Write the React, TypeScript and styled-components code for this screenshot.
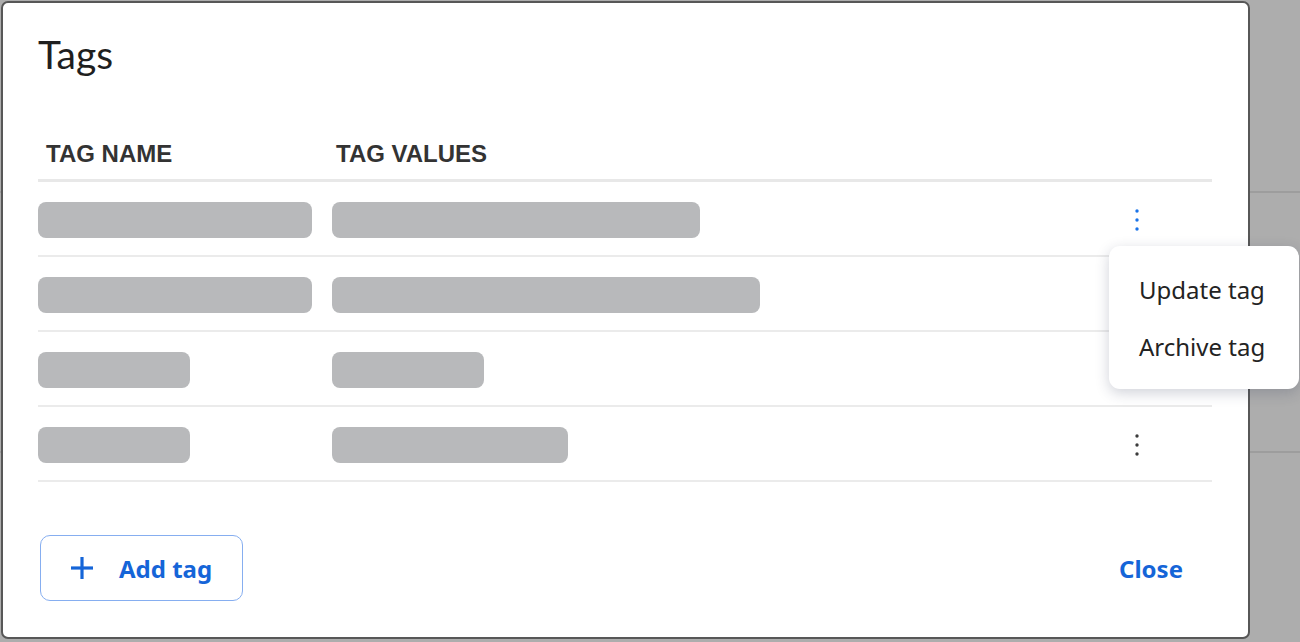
import styled, { createGlobalStyle } from 'styled-components'

const GlobalStyle = createGlobalStyle`
	html, body {
		margin: 0;
		padding: 0;
		background: #adadad;
		font-family: 'Noto Sans', 'Liberation Sans', sans-serif;
	}
`

const Page = styled.div`
	position: relative;
	width: 1300px;
	height: 642px;
	overflow: hidden;
`

const BackdropRow = styled.div<{ $height: number }>`
	height: ${({ $height }) => $height}px;
	border-bottom: 2px solid #9d9d9d;
`

const Dialog = styled.section`
	position: absolute;
	top: 1px;
	left: 1px;
	width: 1249px;
	height: 638px;
	box-sizing: border-box;
	background: #ffffff;
	border: 2px solid #575757;
	border-radius: 7px;
	padding: 27px 36px 0 35px;
	display: flex;
	flex-direction: column;
`

const Title = styled.h2`
	margin: 0;
	font-family: Lato, 'Noto Sans', sans-serif;
	font-weight: 400;
	font-size: 39px;
	line-height: 48px;
	color: #1f1f1f;
`

const Table = styled.div`
	margin-top: 62px;
	display: flex;
	flex-direction: column;
`

const HeaderRow = styled.div`
	display: grid;
	grid-template-columns: 294px 1fr 140px;
	padding-bottom: 11px;
	border-bottom: 3px solid #e8e8e8;
`

const HeaderCell = styled.div<{ $indent: number }>`
	padding-left: ${({ $indent }) => $indent}px;
	font-family: 'Liberation Sans', Arial, sans-serif;
	font-weight: 700;
	font-size: 24px;
	line-height: 28px;
	color: #333333;
`

const Row = styled.div`
	display: grid;
	grid-template-columns: 294px 1fr 140px;
	align-items: center;
	padding: 20px 0 17px;
	border-bottom: 2px solid #ebebeb;
`

const Skeleton = styled.div<{ $width: number }>`
	width: ${({ $width }) => $width}px;
	height: 36px;
	border-radius: 8px;
	background: #b8b9bb;
`

const KebabButton = styled.button<{ $active?: boolean }>`
	justify-self: start;
	margin-left: 50px;
	width: 30px;
	height: 30px;
	padding: 0;
	border: 0;
	background: transparent;
	display: flex;
	align-items: center;
	justify-content: center;
	color: ${({ $active }) => ($active ? '#1a73e8' : '#3c3c3c')};
	cursor: pointer;
`

const Footer = styled.div`
	margin-top: 53px;
	display: flex;
	align-items: center;
	justify-content: space-between;
	padding-left: 2px;
	padding-right: 29px;
`

const AddButton = styled.button`
	display: flex;
	align-items: center;
	gap: 26px;
	height: 66px;
	width: 203px;
	box-sizing: border-box;
	padding: 0 0 0 30px;
	border: 1.5px solid #86aef0;
	border-radius: 10px;
	background: #ffffff;
	color: #1565d8;
	font-family: 'Noto Sans', sans-serif;
	font-weight: 700;
	font-size: 24px;
	cursor: pointer;
`

const TextButton = styled.button`
	padding: 0;
	border: 0;
	background: transparent;
	color: #1565d8;
	font-family: 'Noto Sans', sans-serif;
	font-weight: 700;
	font-size: 24px;
	cursor: pointer;
`

const Menu = styled.ul`
	position: absolute;
	top: 246px;
	left: 1109px;
	width: 190px;
	height: 143px;
	box-sizing: border-box;
	margin: 0;
	padding: 15px 0 0;
	list-style: none;
	background: #ffffff;
	border-radius: 11px;
	box-shadow: 0 4px 14px rgba(40, 50, 80, 0.22);
`

const MenuItem = styled.li`
	padding-left: 30px;
	height: 57px;
	line-height: 57px;
	font-family: 'Noto Sans', sans-serif;
	font-size: 24px;
	color: #232323;
`

const rows = [
	{ name: 274, values: 368, active: true },
	{ name: 274, values: 428 },
	{ name: 152, values: 152 },
	{ name: 152, values: 236, kebab: true },
]

const Kebab = () => (
	<svg width="6" height="24" viewBox="0 0 6 24" fill="currentColor">
		<circle cx="3" cy="3" r="1.7" />
		<circle cx="3" cy="12" r="1.7" />
		<circle cx="3" cy="21" r="1.7" />
	</svg>
)

const Plus = () => (
	<svg width="22" height="22" viewBox="0 0 22 22" stroke="currentColor" strokeWidth="3.2">
		<line x1="11" y1="0" x2="11" y2="22" />
		<line x1="0" y1="11" x2="22" y2="11" />
	</svg>
)

const App = () => {
	return (
		<Page>
			<GlobalStyle />
			<BackdropRow $height={191} />
			<BackdropRow $height={258} />
			<Dialog aria-label="Tags">
				<Title>Tags</Title>
				<Table>
					<HeaderRow>
						<HeaderCell $indent={8}>TAG NAME</HeaderCell>
						<HeaderCell $indent={4}>TAG VALUES</HeaderCell>
						<div />
					</HeaderRow>
					{rows.map((row, index) => (
						<Row key={`row-${index}`}>
							<Skeleton $width={row.name} />
							<Skeleton $width={row.values} />
							{row.active || row.kebab ? (
								<KebabButton $active={row.active} aria-label="More actions">
									<Kebab />
								</KebabButton>
							) : (
								<div />
							)}
						</Row>
					))}
				</Table>
				<Footer>
					<AddButton>
						<Plus />
						Add tag
					</AddButton>
					<TextButton>Close</TextButton>
				</Footer>
			</Dialog>
			<Menu role="menu">
				<MenuItem role="menuitem">Update tag</MenuItem>
				<MenuItem role="menuitem">Archive tag</MenuItem>
			</Menu>
		</Page>
	)
}

export default App
